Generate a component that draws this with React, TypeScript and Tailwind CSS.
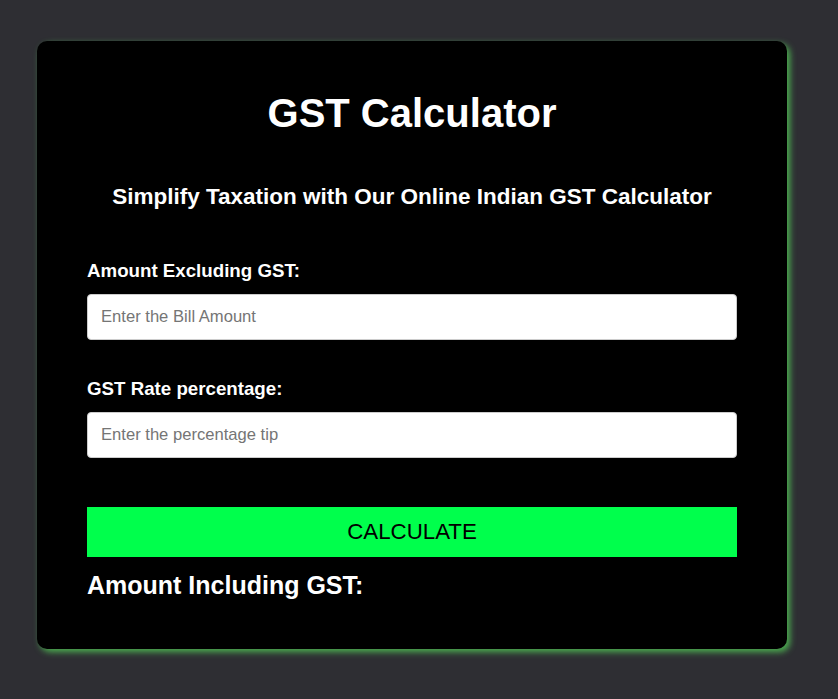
export default function App() {
  return (
    <div className="min-h-[699px] w-full bg-[#2e2e33] pt-[41px] pl-[37px]" style={{ fontFamily: '"Liberation Sans", Arial, sans-serif' }}>
      <div className="w-[750px] h-[608px] rounded-[10px] bg-black shadow-[3px_3px_6px_#4caf50] px-[50px] flex flex-col">
        <h1 className="text-white font-bold text-[40px] leading-[46px] text-center mt-[49px]">GST Calculator</h1>
        <h2 className="text-white font-bold text-[22.5px] leading-[26px] text-center mt-[48px]">Simplify Taxation with Our Online Indian GST Calculator</h2>
        <label className="text-white font-bold text-[18.72px] leading-[22px] mt-[50px]">Amount Excluding GST:</label>
        <input
          type="text"
          placeholder="Enter the Bill Amount"
          className="mt-[12px] h-[46px] w-full rounded-[4px] border border-[#cccccc] bg-white px-[13px] text-[16.6px] text-black placeholder:text-[#757575] outline-none"
        />
        <label className="text-white font-bold text-[18.72px] leading-[22px] mt-[38px]">GST Rate percentage:</label>
        <input
          type="text"
          placeholder="Enter the percentage tip"
          className="mt-[12px] h-[46px] w-full rounded-[4px] border border-[#cccccc] bg-white px-[13px] text-[16.6px] text-black placeholder:text-[#757575] outline-none"
        />
        <button className="mt-[49px] h-[50px] w-full bg-[#00ff4c] text-black text-[22.3px] leading-[50px]">CALCULATE</button>
        <h2 className="text-white font-bold text-[25px] leading-[28px] mt-[14px]">Amount Including GST:</h2>
      </div>
    </div>
  );
}
